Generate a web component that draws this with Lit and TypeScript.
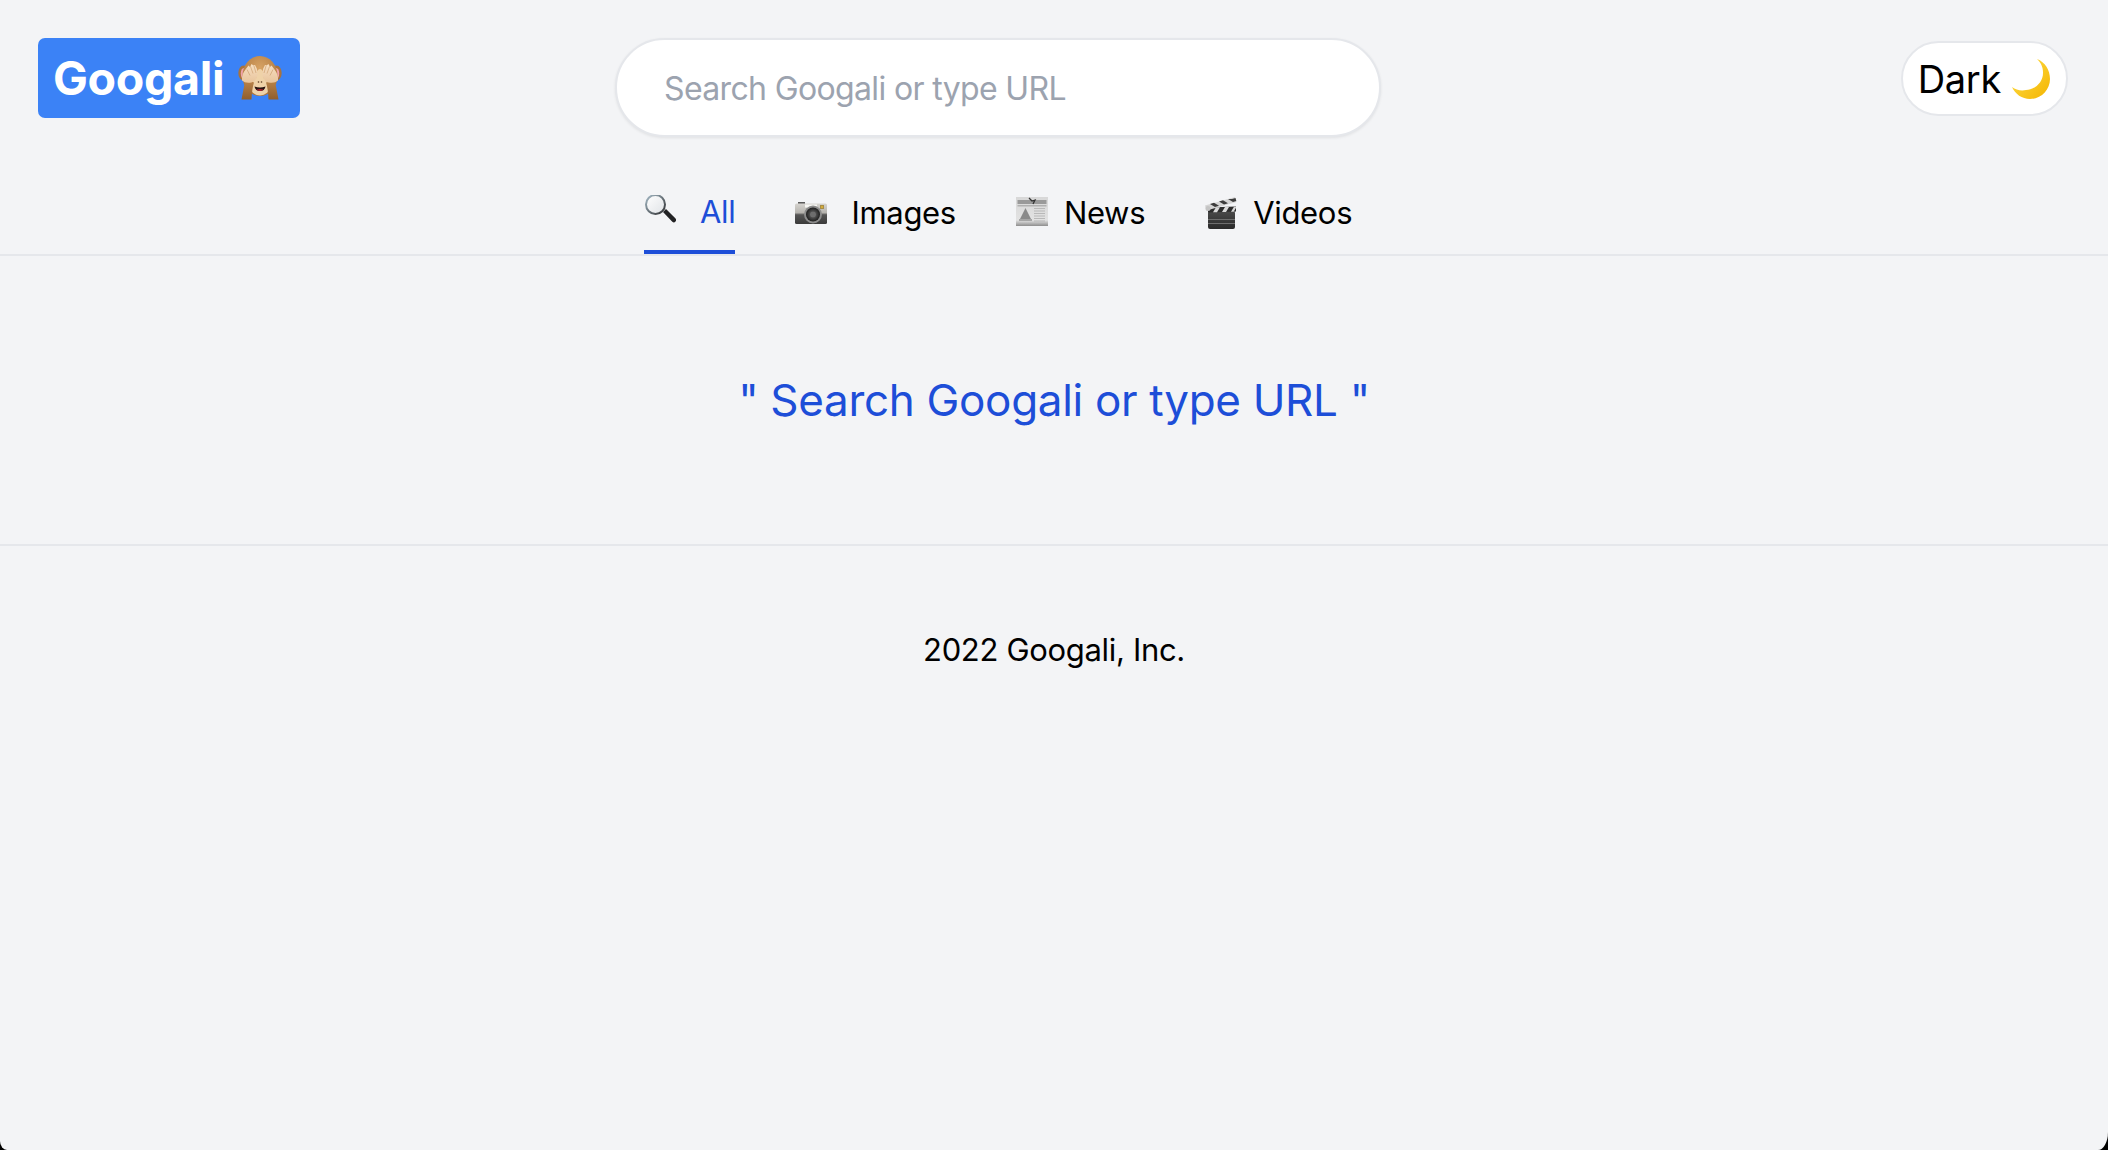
import { LitElement, html, css } from "lit";
import { customElement } from "lit/decorators.js";

const monkey = html`<svg class="emoji monkey" viewBox="0 0 44 44">
  <defs>
    <radialGradient id="fur" cx="50%" cy="30%" r="65%"><stop offset="0" stop-color="#d7a264" /><stop offset="1" stop-color="#ad763c" /></radialGradient>
    <linearGradient id="hand" x1="0" y1="0" x2="0" y2="1"><stop offset="0" stop-color="#f7dfc2" /><stop offset="1" stop-color="#e8c49c" /></linearGradient>
    <linearGradient id="arm" x1="0" y1="0" x2="0" y2="1"><stop offset="0" stop-color="#b9834a" /><stop offset="1" stop-color="#8f5e2e" /></linearGradient>
  </defs>
  <ellipse cx="5.500" cy="17" rx="5.200" ry="7.500" fill="#a8733e" /><ellipse cx="38.500" cy="17" rx="5.200" ry="7.500" fill="#a8733e" />
  <ellipse cx="5.800" cy="17.500" rx="3" ry="5.500" fill="#f0a3ab" /><ellipse cx="38.200" cy="17.500" rx="3" ry="5.500" fill="#f0a3ab" />
  <ellipse cx="22" cy="20" rx="17.500" ry="20" fill="url(#fur)" />
  <ellipse cx="22" cy="30.500" rx="10" ry="9" fill="#efd2a8" />
  <ellipse cx="22" cy="20" rx="4" ry="7" fill="#efd2a8" />
  <circle cx="20.500" cy="26" r=".8" fill="#5a3a20" /><circle cx="23.500" cy="26" r=".8" fill="#5a3a20" />
  <path d="M16.500 30.500q5.500 1.800 11 0q-1 4.500-5.500 4.500t-5.500-4.500z" fill="#241010" />
  <path d="M18.500 33.500q3.500-1 7 0q-1.500 1.500-3.500 1.500t-3.500-1.500z" fill="#a8242a" />
  <path d="M3.500 43.500l2.500-13q1-5 5-6l5 2q-2 6-2.500 17zM40.500 43.500l-2.500-13q-1-5-5-6l-5 2q2 6 2.500 17z" fill="url(#arm)" />
  <path d="M4 24.500q-.5-6 3.500-11l3-4 1.500 1.500 1.500-3 2 1.500 1.500-.5 2 4 .5 6.500q-2 6.500-6 7q-6.500 1-9.500-2z" fill="url(#hand)" />
  <path d="M40 24.500q.5-6-3.500-11l-3-4-1.500 1.500-1.500-3-2 1.500-1.500-.5-2 4-.5 6.500q2 6.500 6 7q6.500 1 9.500-2z" fill="url(#hand)" />
  <path d="M9 13.500l3 6M12.500 10.500l2.500 7M16 10l2 7M35 13.500l-3 6M31.500 10.500l-2.500 7M28 10l-2 7" stroke="#cfa273" stroke-width=".7" fill="none" />
</svg>`;

const magnifier = html`<svg class="emoji tab-icon" viewBox="0 0 32 32">
  <defs><linearGradient id="glass" x1="0" y1="0" x2="1" y2="1"><stop offset="0" stop-color="#ffffff" /><stop offset="1" stop-color="#dfe2e6" /></linearGradient>
  <linearGradient id="rim" x1="0" y1="0" x2="1" y2="1"><stop offset="0" stop-color="#a7bcc8" /><stop offset="1" stop-color="#2e2e30" /></linearGradient></defs>
  <path d="M19 17l3-3 9.300 9.300a2.100 2.100 0 0 1-3 3.400z" fill="#222224" />
  <circle cx="11.500" cy="9.500" r="9.500" fill="url(#glass)" stroke="url(#rim)" stroke-width="2" />
</svg>`;

const camera = html`<svg class="emoji tab-icon" viewBox="0 -5 32 32">
  <defs><linearGradient id="camtop" x1="0" y1="0" x2="0" y2="1"><stop offset="0" stop-color="#d6d4d0" /><stop offset=".45" stop-color="#b5b3ae" /><stop offset=".55" stop-color="#555" /><stop offset="1" stop-color="#3a3a3a" /></linearGradient>
  <radialGradient id="lens"><stop offset="0" stop-color="#2a2a2a" /><stop offset=".5" stop-color="#4a4a4a" /><stop offset="1" stop-color="#1e1e1e" /></radialGradient></defs>
  <rect x="3" y="0" width="7" height="3" fill="#5a5a5a" />
  <rect x="0" y="1.500" width="32" height="20.500" rx="1.500" fill="url(#camtop)" />
  <rect x="10" y="2.500" width="12" height="3" fill="#f7f7f4" />
  <rect x="25" y="3" width="4" height="4" fill="#a78d48" /><circle cx="27" cy="5" r="1" fill="#e3b733" />
  <circle cx="18" cy="12.500" r="9" fill="#8b8b8b" /><circle cx="18" cy="12.500" r="7" fill="url(#lens)" /><circle cx="18" cy="12.500" r="3" fill="#6d6d6d" />
</svg>`;

const newspaper = html`<svg class="emoji tab-icon" viewBox="0 0 32 32">
  <defs><linearGradient id="paper" x1="0" y1="0" x2="0" y2="1"><stop offset="0" stop-color="#d8d8d8" /><stop offset=".8" stop-color="#e2e2e2" /><stop offset="1" stop-color="#8e8e8e" /></linearGradient></defs>
  <rect x="0" y="0" width="32" height="29" fill="url(#paper)" />
  <rect x="1.500" y="3" width="29" height="4" fill="#9a9a9a" />
  <path d="M13 1l3 3 3-1-2 4" stroke="#333" stroke-width="1.300" fill="none" />
  <rect x="1.500" y="8" width="29" height="1.500" fill="#b1b1b1" />
  <path d="M9.500 11l6 12H3.500z" fill="#8a8a8a" /><rect x="3" y="22" width="13" height="2" fill="#a6a6a6" />
  <path d="M18 11.500h11M18 14h11M18 16.500h11M18 19h11M18 21.500h11M18 24h11" stroke="#b8b8b8" stroke-width="1.100" />
</svg>`;

const clapper = html`<svg class="emoji tab-icon" viewBox="0 0 32 32">
  <defs><linearGradient id="slate" x1="0" y1="0" x2="0" y2="1"><stop offset="0" stop-color="#4a4a4a" /><stop offset="1" stop-color="#2a2a2a" /></linearGradient></defs>
  <rect x="3" y="14" width="27" height="18" rx="2" fill="url(#slate)" />
  <path d="M3 22.500h27M3 26.500h27" stroke="#6e6e6e" stroke-width="1" />
  <path d="M3 15.500l28-1V9.500L3 10.500z" fill="#2c2c2c" />
  <path d="M8 15.300l3-5h4l-3 5zM17 15l3-5h4l-3 5zM26 14.700l3-5h2v1l-2.300 4z" fill="#d9d9d9" />
  <path d="M0 8.500L30 0l1.500 5L1.500 13.500z" fill="#d4d4d4" />
  <path d="M5 7l5 3 4-1.200-5-3zM14 4.500l5 3 4-1.200-5-3zM23 2l5 3 3.300-1-.8-3-3.500 1z" fill="#3c3c3c" />
  <circle cx="3" cy="11.500" r="2.500" fill="#c4c4c4" />
</svg>`;

const moon = html`<svg class="emoji moon" viewBox="0 0 38 40">
  <defs><linearGradient id="moonfill" x1="0" y1="0" x2="1" y2="1"><stop offset="0" stop-color="#ffe14d" /><stop offset="1" stop-color="#f4b400" /></linearGradient></defs>
  <path d="M25 0C33 3 38 11 38 20c0 11-9 20-20 20C10 40 3 35 0 28c4 3 9 4 14 3 11-1 17-9 17-17 0-6-2-10-6-14z" fill="url(#moonfill)" />
</svg>`;

const tabs = [
  { label: "All", icon: magnifier, active: true, wide: true },
  { label: "Images", icon: camera, active: false, wide: true },
  { label: "News", icon: newspaper, active: false, wide: false },
  { label: "Videos", icon: clapper, active: false, wide: false },
];

@customElement("app-root")
export class AppRoot extends LitElement {
  static styles = css`
    :host {
      display: block;
      background: #000;
      font-family: Inter, "Liberation Sans", sans-serif;
      letter-spacing: -0.02em;
      color: #000;
    }

    .page {
      min-height: 1150px;
      background: #f3f4f6;
      border-radius: 0 0 10px 7px / 0 0 18px 9px;
      overflow: hidden;
    }

    .emoji {
      display: block;
      flex-shrink: 0;
    }

    header {
      border-bottom: 2px solid #e5e7eb;
      height: 256px;
      box-sizing: border-box;
      padding: 38px 40px 0 38px;
    }

    .top {
      display: flex;
      align-items: flex-start;
    }

    .logo {
      display: flex;
      align-items: center;
      justify-content: space-between;
      width: 262px;
      height: 80px;
      box-sizing: border-box;
      padding: 0 18px 0 15px;
      background: #3b82f6;
      border-radius: 7px;
      color: #fff;
      font-size: 46.5px;
      font-weight: 700;
    }

    .monkey {
      width: 44px;
      height: 44px;
    }

    .search {
      width: 766px;
      height: 99px;
      box-sizing: border-box;
      margin-left: 315px;
      padding: 2px 47px 0;
      border: 2px solid #e5e7eb;
      border-radius: 50px;
      background: #fff;
      box-shadow: 0 1px 3px rgba(0, 0, 0, 0.08);
      font: 32px Inter, sans-serif;
      letter-spacing: -0.02em;
      outline: none;
    }

    .search::placeholder {
      color: #9ca3af;
      opacity: 1;
    }

    .theme {
      display: flex;
      align-items: center;
      gap: 11px;
      margin-left: auto;
      margin-top: 3px;
      height: 75px;
      box-sizing: border-box;
      padding: 0 16px 0 15px;
      border: 2px solid #e5e7eb;
      border-radius: 38px;
      background: #fff;
      font-size: 38px;
    }

    .moon {
      width: 38px;
      height: 40px;
    }

    nav {
      display: flex;
      gap: 60px;
      margin-left: 606px;
      margin-top: 41px;
    }

    .tab {
      display: flex;
      align-items: center;
      gap: 16px;
      height: 76px;
      box-sizing: border-box;
      padding-bottom: 3px;
      border-bottom: 4px solid transparent;
      font-size: 31px;
    }

    .tab.wide {
      gap: 24px;
    }

    .tab.active {
      color: #1d4ed8;
      border-bottom-color: #1d4ed8;
      padding-bottom: 6px;
    }

    .tab-icon {
      width: 32px;
      height: 32px;
    }

    main {
      display: flex;
      align-items: center;
      justify-content: center;
      height: 290px;
      box-sizing: border-box;
      border-bottom: 2px solid #e5e7eb;
      color: #1d4ed8;
      font-size: 44px;
    }

    footer {
      padding-top: 85px;
      text-align: center;
      font-size: 31px;
    }
  `;

  render() {
    return html`
      <div class="page">
        <header>
          <div class="top">
            <div class="logo"><span>Googali</span>${monkey}</div>
            <input class="search" placeholder="Search Googali or type URL" />
            <div class="theme"><span>Dark</span>${moon}</div>
          </div>
          <nav>
            ${tabs.map(
              (t) => html`<div class="tab ${t.wide ? "wide" : ""} ${t.active ? "active" : ""}">
                ${t.icon}<span>${t.label}</span>
              </div>`
            )}
          </nav>
        </header>
        <main>" Search Googali or type URL "</main>
        <footer>2022 Googali, Inc.</footer>
      </div>
    `;
  }
}
